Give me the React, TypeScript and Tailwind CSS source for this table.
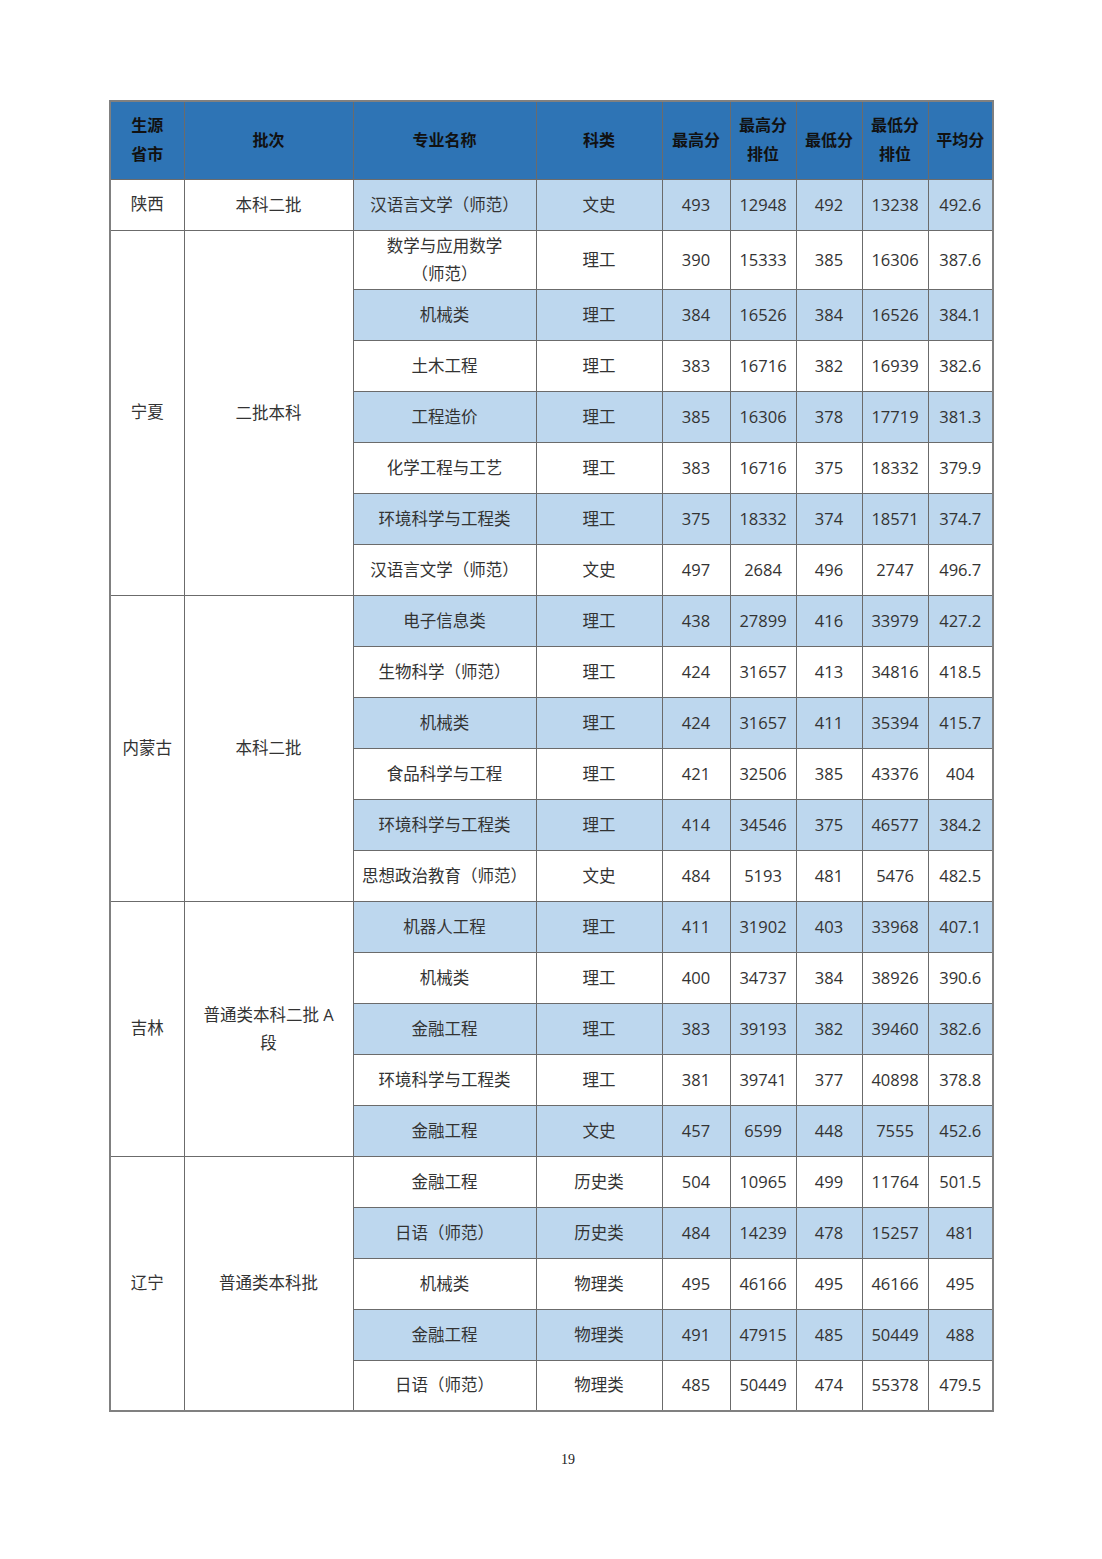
import React from 'react';

type Row = [string, string, string, string, string, string, string];

interface Group {
  prov: string;
  batch: string[];
  rows: Row[];
}

const groups: Group[] = [
  {
    prov: '陕西',
    batch: ['本科二批'],
    rows: [['汉语言文学（师范）', '文史', '493', '12948', '492', '13238', '492.6']],
  },
  {
    prov: '宁夏',
    batch: ['二批本科'],
    rows: [
      ['数学与应用数学\n（师范）', '理工', '390', '15333', '385', '16306', '387.6'],
      ['机械类', '理工', '384', '16526', '384', '16526', '384.1'],
      ['土木工程', '理工', '383', '16716', '382', '16939', '382.6'],
      ['工程造价', '理工', '385', '16306', '378', '17719', '381.3'],
      ['化学工程与工艺', '理工', '383', '16716', '375', '18332', '379.9'],
      ['环境科学与工程类', '理工', '375', '18332', '374', '18571', '374.7'],
      ['汉语言文学（师范）', '文史', '497', '2684', '496', '2747', '496.7'],
    ],
  },
  {
    prov: '内蒙古',
    batch: ['本科二批'],
    rows: [
      ['电子信息类', '理工', '438', '27899', '416', '33979', '427.2'],
      ['生物科学（师范）', '理工', '424', '31657', '413', '34816', '418.5'],
      ['机械类', '理工', '424', '31657', '411', '35394', '415.7'],
      ['食品科学与工程', '理工', '421', '32506', '385', '43376', '404'],
      ['环境科学与工程类', '理工', '414', '34546', '375', '46577', '384.2'],
      ['思想政治教育（师范）', '文史', '484', '5193', '481', '5476', '482.5'],
    ],
  },
  {
    prov: '吉林',
    batch: ['普通类本科二批 A', '段'],
    rows: [
      ['机器人工程', '理工', '411', '31902', '403', '33968', '407.1'],
      ['机械类', '理工', '400', '34737', '384', '38926', '390.6'],
      ['金融工程', '理工', '383', '39193', '382', '39460', '382.6'],
      ['环境科学与工程类', '理工', '381', '39741', '377', '40898', '378.8'],
      ['金融工程', '文史', '457', '6599', '448', '7555', '452.6'],
    ],
  },
  {
    prov: '辽宁',
    batch: ['普通类本科批'],
    rows: [
      ['金融工程', '历史类', '504', '10965', '499', '11764', '501.5'],
      ['日语（师范）', '历史类', '484', '14239', '478', '15257', '481'],
      ['机械类', '物理类', '495', '46166', '495', '46166', '495'],
      ['金融工程', '物理类', '491', '47915', '485', '50449', '488'],
      ['日语（师范）', '物理类', '485', '50449', '474', '55378', '479.5'],
    ],
  },
];

const headers: string[][] = [
  ['生源', '省市'],
  ['批次'],
  ['专业名称'],
  ['科类'],
  ['最高分'],
  ['最高分', '排位'],
  ['最低分'],
  ['最低分', '排位'],
  ['平均分'],
];

const widths = [74, 169, 183, 126, 68, 66, 66, 66, 65];

const cell = 'border border-[#6b6b6b] text-center align-middle p-0';

function Lines({ text }: { text: string }) {
  const parts = text.split('\n');
  return (
    <>
      {parts.map((p, i) => (
        <div key={i} className="leading-[28px]">
          {p}
        </div>
      ))}
    </>
  );
}

export default function App() {
  let idx = 0;
  return (
    <div
      className="w-[1102px] h-[1559px] bg-white pt-[100px] pl-[109px]"
      style={{ fontFamily: '"Open Sans", "Noto Sans CJK SC", sans-serif' }}
    >
      <table className="w-[884px] table-fixed border-collapse border-2 border-[#808080] text-[16.5px] text-[#333]">
        <colgroup>
          {widths.map((w, i) => (
            <col key={i} style={{ width: w }} />
          ))}
        </colgroup>
        <thead>
          <tr className="h-[78px] bg-[#2e74b5]">
            {headers.map((h, i) => (
              <th key={i} className={`${cell} font-bold text-[16px] text-[#111]`}>
                {h.map((l, j) => (
                  <div key={j} className="leading-[29px]">
                    {l}
                  </div>
                ))}
              </th>
            ))}
          </tr>
        </thead>
        <tbody>
          {groups.map((g) =>
            g.rows.map((r, ri) => {
              const blue = idx % 2 === 0;
              const tall = r[0].includes('\n');
              idx++;
              return (
                <tr key={`${g.prov}-${ri}`} className={tall ? 'h-[59px]' : 'h-[51px]'}>
                  {ri === 0 && (
                    <>
                      <td rowSpan={g.rows.length} className={`${cell} bg-white`}>
                        {g.prov}
                      </td>
                      <td rowSpan={g.rows.length} className={`${cell} bg-white px-3`}>
                        {g.batch.map((b, j) => (
                          <div key={j} className="leading-[28px]">
                            {b}
                          </div>
                        ))}
                      </td>
                    </>
                  )}
                  {r.map((v, ci) => (
                    <td key={ci} className={`${cell} ${blue ? 'bg-[#bdd7ee]' : 'bg-white'}`}>
                      <Lines text={v} />
                    </td>
                  ))}
                </tr>
              );
            })
          )}
        </tbody>
      </table>
      <div
        className="w-[918px] mt-[39px] text-center text-[14px] text-[#222] leading-[18px]"
        style={{ fontFamily: '"Liberation Serif", serif' }}
      >
        19
      </div>
    </div>
  );
}
